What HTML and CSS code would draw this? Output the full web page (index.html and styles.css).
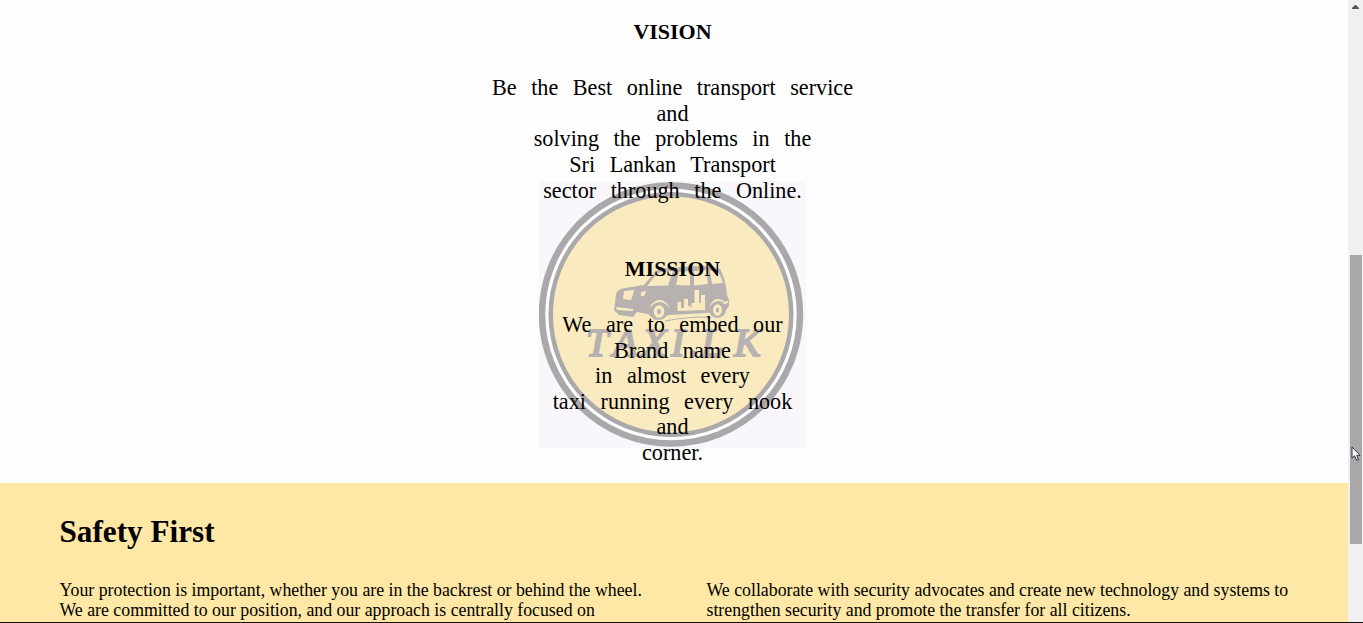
FILE: index.html
```html
<!DOCTYPE html>
<html lang="en">
<head>
<meta charset="utf-8">
<title>Taxi.LK</title>
<link rel="stylesheet" href="styles.css">
</head>
<body>
<div class="window">
  <main class="page">
    <section class="about">
      <svg class="logo" viewBox="0 0 267 267" aria-hidden="true">
        <rect class="logo-bg" width="267" height="267"/>
        <circle class="logo-outer" cx="132" cy="133.5" r="129"/>
        <circle class="logo-inner" cx="132" cy="133.5" r="120.3"/>
        <g class="logo-ink">
          <path d="M77 113Q79 108 86 107L105 104L116 91Q118 88 125 87.500L150 85.500Q170 84 181 88Q185 95 187 106L188 114L190 119L190 125L187 129L168 132L130 134L116 139L109 133L98 131L94 136L80 134L75 129L76 122Z"/>
          <circle cx="120" cy="130" r="9"/><circle cx="178.500" cy="128.500" r="8.500"/>
          <path class="logo-line" d="M126 140Q150 135 172 136.500"/>
        </g>
        <g class="logo-cut">
          <path d="M108 105L118 92.500Q120 91 134 90L129 104.500ZM137 104L140 91L151 90V104.500ZM155 90L167 89L169 103L155 104.500ZM171 89.500L179 90.500Q182 95 184 102L173 103Z"/>
          <path d="M85 110L95 109Q94 114 92 119L84 118ZM77 126L94 128V130L78 129ZM102 111L107 110L105 115L102 115ZM184 121L189 120V122L185 123Z"/>
          <path d="M138.500 130V121h3.500v6h3v-9h4v7h3v-3h3.500V109h4.500v13h2V114h4v15Z"/>
          <path d="M110 128Q113 120 120 119Q128 119 131 128Q127 121 120 121Q114 122 110 128ZM170 127Q173 118 179 118Q185 118 187 124Q184 120 179 120Q174 120 170 127Z"/>
          <ellipse cx="120" cy="130.500" rx="5.300" ry="6.300"/><ellipse cx="178.500" cy="129" rx="4.500" ry="5.800"/>
        </g>
        <g class="logo-ink"><ellipse cx="120" cy="130.500" rx="2" ry="2.700"/><ellipse cx="178.500" cy="129" rx="1.700" ry="2.500"/></g>
        <path class="logo-line" d="M99 118L113 117M152 91V127M168 106H174"/>
        <g class="logo-name">
          <text x="47" y="175">T</text><text x="74" y="175">A</text><text x="103" y="175">X</text><text x="132" y="175">I</text><text x="150" y="175">.</text><text x="162" y="175">L</text><text x="195" y="175">K</text>
        </g>
      </svg>
      <h2 class="title">VISION</h2>
      <p class="statement">Be the Best online transport service<br>and<br>solving the problems in the<br>Sri Lankan Transport<br>sector through the Online.</p>
      <h2 class="title title-mission">MISSION</h2>
      <p class="statement">We are to embed our<br>Brand name<br>in almost every<br>taxi running every nook<br>and<br>corner.</p>
    </section>
    <section class="safety">
      <h1 class="safety-title">Safety First</h1>
      <div class="columns">
        <p class="copy">Your protection is important, whether you are in the backrest or behind the wheel.<br>We are committed to our position, and our approach is centrally focused on</p>
        <p class="copy">We collaborate with security advocates and create new technology and systems to<br>strengthen security and promote the transfer for all citizens.</p>
      </div>
    </section>
  </main>
  <aside class="scrollbar">
    <svg class="arrow" viewBox="0 0 7 4"><path d="M0 4V3L3 0H4L7 3V4Z"/></svg>
    <div class="thumb"></div>
  </aside>
  <svg class="cursor" viewBox="0 0 10 16"><path d="M1 1V12L3.5 9.8L5.4 14H7.5L5.8 9.3H9Z"/></svg>
</div>
</body>
</html>
```
FILE: styles.css
```css
* { box-sizing: border-box; }
body { margin: 0; overflow: hidden; background: #fefefe; color: #000; font-family: "Liberation Serif", "Times New Roman", serif; }
.window { position: relative; display: flex; height: 623px; border-bottom: 1px solid #111; overflow: hidden; }
.page { flex: 1; display: flex; flex-direction: column; }
.about { position: relative; height: 483px; flex: none; padding-top: 19px; text-align: center; font-size: 22.2px; line-height: 25.6px; padding-right: 3px; }
.logo { position: absolute; left: 539px; top: 181px; width: 267px; height: 267px; }
.logo-bg { fill: #f9f7fb; }
.logo-outer { fill: #fff; stroke: #aaa8aa; stroke-width: 6.5; }
.logo-inner { fill: #faeac0; stroke: #aaa8aa; stroke-width: 4.5; }
.logo-ink { fill: #b7b1b0; }
.logo-line { fill: none; stroke: #b7b1b0; stroke-width: 1; }
.logo-cut { fill: #faeac0; }
.logo-name { fill: #b7b1b0; stroke: #b7b1b0; stroke-width: 2; stroke-linejoin: round; font: italic 40px "Liberation Serif", serif; }
.title { position: relative; margin: 0 0 30.7px; font-size: 22px; line-height: 25.6px; }
.title-mission { margin-top: 52.8px; margin-bottom: 30.3px; }
.statement { position: relative; margin: 0; word-spacing: 9px; }
.safety { flex: 1; padding: 30px 59px 0 59.5px; background: #ffe8a5; }
.safety-title { margin: 0; font-size: 31.2px; line-height: 38px; }
.columns { display: grid; grid-template-columns: 647px 1fr; margin-top: 29px; }
.copy { margin: 0; font-size: 17.8px; line-height: 20px; white-space: nowrap; }
.scrollbar { width: 15px; background: #f1eff2; padding: 5px 1px 0 2px; display: flex; flex-direction: column; }
.arrow { width: 7px; height: 4px; margin-left: 2px; fill: #555; }
.thumb { height: 289px; margin-top: 246px; background: #a9a7aa; }
.cursor { position: absolute; left: 1351px; top: 446px; width: 10px; height: 16px; fill: #fff; stroke: #333344; stroke-width: 1; }
```
